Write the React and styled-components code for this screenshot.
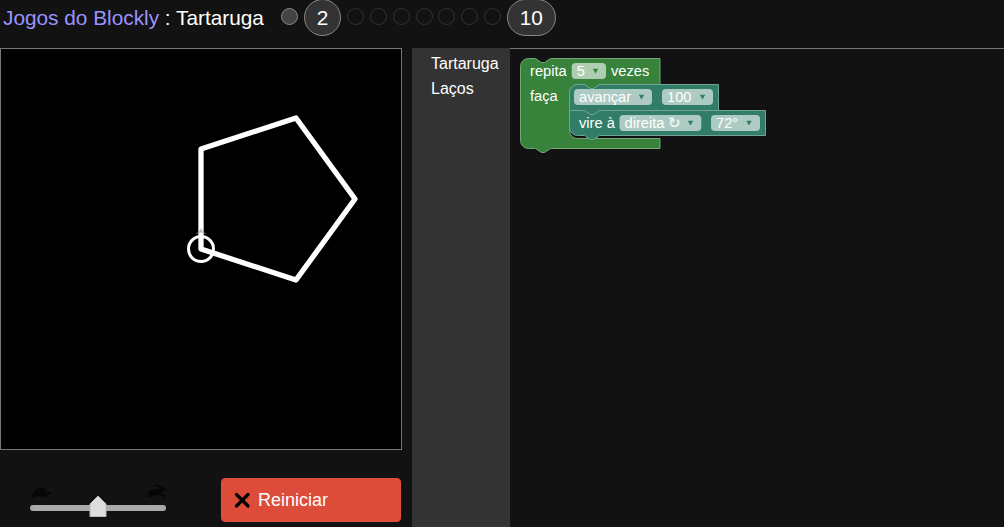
import React from 'react';
import styled, { createGlobalStyle } from 'styled-components';

const Global = createGlobalStyle`
  body {
    margin: 0;
    background: #121212;
    color: #fff;
    font-family: "Liberation Sans", Arial, sans-serif;
    overflow: hidden;
  }
`;

const Page = styled.div`
  height: 100vh;
  display: flex;
  flex-direction: column;
`;

const Header = styled.header`
  flex: none;
  height: 48px;
  display: flex;
  align-items: flex-start;
  font-size: 20.8px;
`;

const Title = styled.h1`
  margin: 0;
  width: 281px;
  box-sizing: border-box;
  padding: 6px 0 0 3px;
  font: inherit;
  line-height: 24px;
  white-space: nowrap;
`;

const HomeLink = styled.a`
  color: #9a94ff;
  text-decoration: none;
`;

const Levels = styled.nav`
  display: flex;
  align-items: center;
  height: 36px;
  gap: 5.8px;
`;

const Dot = styled.span`
  box-sizing: border-box;
  width: 17px;
  height: 17px;
  margin-bottom: 3px;
  border-radius: 50%;
  border: 1px solid ${(p) => (p.$done ? '#888' : '#333')};
  background: ${(p) => (p.$done ? '#444' : 'transparent')};
`;

const Level = styled.span`
  box-sizing: border-box;
  width: ${(p) => p.$width}px;
  height: 37px;
  line-height: 35px;
  margin-top: -1px;
  text-align: center;
  border-radius: 19px;
  border: 1px solid #888;
  background: #333;
`;

const Main = styled.main`
  flex: 1;
  min-height: 0;
  display: flex;
`;

const LeftColumn = styled.section`
  width: 412px;
  flex: none;
`;

const Stage = styled.div`
  box-sizing: border-box;
  width: 402px;
  height: 402px;
  border: 1px solid #777;
  background: #000;
  svg { display: block; }
`;

const Controls = styled.div`
  display: flex;
  width: 401px;
  justify-content: space-between;
  padding-top: 28px;
`;

const ResetButton = styled.button`
  display: flex;
  align-items: center;
  gap: 7px;
  width: 180px;
  height: 44px;
  padding: 0 0 0 12px;
  border: 1px solid #e0503c;
  border-radius: 4px;
  background: #dd4b39;
  color: #fff;
  font: 18px "Liberation Sans", Arial, sans-serif;
`;

const Toolbox = styled.aside`
  width: 98px;
  flex: none;
  box-sizing: border-box;
  padding: 3px 0 0 19px;
  background: #333;
`;

const Category = styled.div`
  height: 25px;
  line-height: 25px;
  font-size: 16px;
`;

const Workspace = styled.section`
  flex: 1;
  min-width: 0;
  border-top: 1px solid #777;
  svg { display: block; }
`;

const BlockText = styled.text`
  font: 14.67px "Liberation Sans", Arial, sans-serif;
  fill: #fff;
`;

const Field = ({ x, y, w, label, color, arrow }) => (
  <g>
    <rect x={x} y={y} width={w} height="16" rx="4" fill="#fff" fillOpacity=".6" />
    <BlockText x={x + 5} y={y + 13}>{label}</BlockText>
    <path d={`M${arrow - 2.7} ${y + 5.8}h5.400l-2.700 4.600z`} fill={color} />
  </g>
);

const GREEN = '#37833b';
const TEAL = '#327d67';

const Slider = () => (
  <svg width="200" height="49" viewBox="0 478 200 49">
    <g fill="#060606">
      <path d="M30.500 497L30.500 495.500L33 494.500C33.500 490.500 37 487.500 41 487.500C44.500 487.500 46.500 490 47.500 492.500L49.500 491.500L51 492.500L50.500 494L47.500 495.500L47.500 497.500H45L44 496.500H36L34.500 497.800H32L33 496.500Z" />
      <path d="M145 495.500L148 493.500L149 491.800C151.500 489.500 155 489 158 489.500L160 488.200L158 486.500L153.500 485.500L155 484.500L159.500 485L163.500 487.500L165.500 489.500L164.500 491L161.500 491.500L161 493L165.800 496L165 497.200L158.500 495H154.500L150 497.200H146.500L150 495L149 494Z" />
    </g>
    <path d="M33 508H163" stroke="#aaa" strokeWidth="6" strokeLinecap="round" />
    <path d="M98 496L106 504V516.500H90V504Z" fill="#ddd" stroke="#bbb" strokeWidth="1" strokeLinejoin="round" />
  </svg>
);

export default function App() {
  return (
    <Page>
      <Global />
      <Header>
        <Title><HomeLink>Jogos do Blockly</HomeLink> : Tartaruga</Title>
        <Levels>
          <Dot $done />
          <Level $width={37.7}>2</Level>
          {[3, 4, 5, 6, 7, 8, 9].map((n) => <Dot key={n} />)}
          <Level $width={49}>10</Level>
        </Levels>
      </Header>
      <Main>
        <LeftColumn>
          <Stage>
            <svg width="400" height="400" viewBox="1 49 400 400" fill="none">
              <path d="M201 249V149L296 118L355 199L296 280Z" stroke="#fff" strokeWidth="5.300" strokeLinejoin="round" />
              <circle cx="201" cy="249" r="12.500" stroke="#fff" strokeWidth="3" />
              <path d="M195.500 234C199 232.500 200 230.500 201 228C202 230.500 203 232.500 206.500 234L201 232.500Z" fill="#bbb" />
            </svg>
          </Stage>
          <Controls>
            <Slider />
            <ResetButton>
              <svg width="17" height="17" viewBox="0 0 17 17">
                <path d="M2.500 2.500L14 14M14 2.500L2.500 14" stroke="#000" strokeWidth="3.200" strokeLinecap="round" />
              </svg>
              Reiniciar
            </ResetButton>
          </Controls>
        </LeftColumn>
        <Toolbox>
          <Category>Tartaruga</Category>
          <Category>Laços</Category>
        </Toolbox>
        <Workspace>
          <svg width="494" height="478" viewBox="510 49 494 478">
            <path
              d="M520.500 66.500a8 8 0 0 1 8-8H535.500l6 4h3l6-4H660V84.500H599.500l-6 4h-3l-6-4h-7a8 8 0 0 0-8 8V130.500a8 8 0 0 0 8 8H660V148.500H550.500l-6 4h-3l-6-4h-7a8 8 0 0 1-8-8Z"
              fill={GREEN} stroke="#73a876"
            />
            <path
              d="M569.500 92.500a8 8 0 0 1 8-8H584.500l6 4h3l6-4H718.500V110.500H599.500l-6 4h-3l-6-4h-15Z"
              fill={TEAL} stroke="#70a495"
            />
            <path
              d="M569.500 110.500H584.500l6 4h3l6-4H765.500V135.500H599.500l-6 4h-3l-6-4h-7a8 8 0 0 1-8-8Z"
              fill={TEAL} stroke="#70a495"
            />
            <BlockText x="530" y="76">repita</BlockText>
            <Field x={571.7} y={63} w={34.3} label="5" arrow={595.5} color={GREEN} />
            <BlockText x="611" y="76">vezes</BlockText>
            <BlockText x="530" y="101">faça</BlockText>
            <Field x={574} y={89} w={78} label="avançar" arrow={641.5} color={TEAL} />
            <Field x={662} y={89} w={51} label="100" arrow={702.5} color={TEAL} />
            <BlockText x="579" y="128">vire à</BlockText>
            <Field x={619.5} y={115} w={81.8} label="direita ↻" arrow={690.5} color={TEAL} />
            <Field x={711} y={115} w={49} label="72°" arrow={749} color={TEAL} />
          </svg>
        </Workspace>
      </Main>
    </Page>
  );
}
